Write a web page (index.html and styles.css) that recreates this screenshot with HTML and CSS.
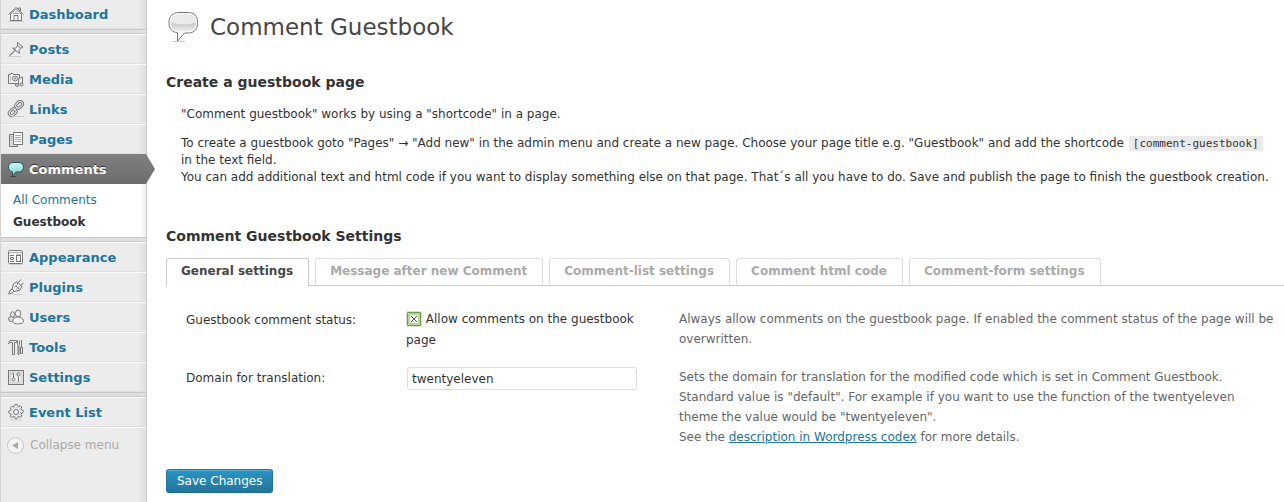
FILE: index.html
```html
<!DOCTYPE html>
<html lang="en">
<head>
<meta charset="utf-8">
<title>Comment Guestbook</title>
<link rel="stylesheet" href="styles.css">
</head>
<body>
<div class="admin">
  <nav class="sidebar" aria-label="Admin menu">
    <div class="group">
      <a class="item" href="#"><svg class="icon" viewBox="0 0 18 18"><path d="M3.500 9v6.500h11V9L9 4z" fill="#fafafa"/><path d="M1.500 9.500 9 2.500l7.500 7M3.500 8.500v7h3.500v-5h4v5h3.500v-7M13.500 6V3h-2v1.500"/><path d="M3 9.500 9 4l6 5.500M6 8.500h6M9 5.500V8" stroke="#aaa"/><path d="M1 16.500h16" stroke="#ccc"/></svg>Dashboard</a>
    </div>
    <div class="group">
      <a class="item" href="#"><svg class="icon" viewBox="0 0 18 18"><path d="m10.500 2.500 5.500 4.500-2 1-2 2.500.5 3L5.500 8l3 .3L10.500 5.500z" fill="#eee"/><path d="m8 10.500-6 6M9 9.500l-6 5.500M10.500 5.500l3 2.500"/><path d="M2 16.500h12" stroke="#ccc"/></svg>Posts</a>
      <a class="item" href="#"><svg class="icon" viewBox="0 0 18 18"><path d="M1.500 4.500h2l.5-1h2l.5 1h6v9h-11z" fill="#f8f8f8"/><circle cx="8" cy="8.500" r="2.500"/><circle cx="8" cy="8.500" r=".7"/><path d="M3.500 6v6" stroke="#bbb"/><path d="M11.500 15V8.500l4-1.500v7" fill="#eee"/><circle cx="10" cy="15" r="1.500" fill="#ddd"/><circle cx="14.500" cy="14.500" r="1.500" fill="#ddd"/></svg>Media</a>
      <a class="item" href="#"><svg class="icon" viewBox="0 0 18 18"><g fill="none"><rect x="8.500" y="2.500" width="7.500" height="5" rx="2.500" transform="rotate(-45 12 5)" stroke-width="3"/><rect x="2" y="10" width="7.500" height="5" rx="2.500" transform="rotate(-45 5.500 12.500)" stroke-width="3"/><path d="m6.500 11 4.500-4.500" stroke-width="3"/><path d="m6.500 11 4.500-4.500" stroke="#eee"/><rect x="8.500" y="2.500" width="7.500" height="5" rx="2.500" transform="rotate(-45 12 5)" stroke="#e8e8e8"/><rect x="2" y="10" width="7.500" height="5" rx="2.500" transform="rotate(-45 5.500 12.500)" stroke="#e8e8e8"/></g><path d="M5 16.500h12" stroke="#ccc"/></svg>Links</a>
      <a class="item" href="#"><svg class="icon" viewBox="0 0 18 18"><path d="M2.500 4.500h8v12h-8z" fill="#ddd"/><path d="M6.500 2.500h9v12h-9z" fill="#fff"/><path d="M8 5.500h6M8 7.500h6M8 9.500h6M8 11.500h6M3.500 6.500h2M3.500 8.500h2M3.500 10.500h2" stroke="#aaa"/></svg>Pages</a>
      <a class="item current" href="#"><svg class="icon bubble" viewBox="0 0 18 18"><defs><linearGradient id="aqua" x2="0" y2="1"><stop stop-color="#d5f7f4"/><stop offset="1" stop-color="#6fcfca"/></linearGradient></defs><path d="M3 16.500h6" stroke="#444"/><path d="M7 2.500h5a4.500 4.700 0 0 1 0 9.500H9l-3.500 4V12A4.700 4.700 0 0 1 7 2.500z" fill="url(#aqua)"/></svg>Comments<svg class="arrow" viewBox="0 0 10 30"><defs><linearGradient id="gray" x2="0" y2="1"><stop stop-color="#808080"/><stop offset="1" stop-color="#6d6d6d"/></linearGradient></defs><path d="M0 0l9 15-9 15z" fill="url(#gray)"/></svg></a>
      <div class="submenu">
        <a href="#">All Comments</a>
        <a class="selected" href="#">Guestbook</a>
      </div>
    </div>
    <div class="group">
      <a class="item" href="#"><svg class="icon" viewBox="0 0 18 18"><rect x="1.500" y="2.500" width="14" height="13" rx="1" fill="#fafafa"/><path d="M2 4.500h13" stroke="#aaa"/><path d="M3 7.500h4M3.500 9.500h3v2h-3zM3 13.500h4M9 7h5"/><rect x="9.500" y="7.500" width="4" height="6" fill="#fff"/><path d="M2 16.500h14" stroke="#ccc"/></svg>Appearance</a>
      <a class="item" href="#"><svg class="icon" viewBox="0 0 18 18"><path d="M10 3.500 6.500 6 5 11l2.500 2.500 5.500-1.500 2-3.500z" fill="#eee"/><path d="m10 6 4-4.500M12.500 8.500 16.500 5M8.500 7.500l4 4M5.500 11l-2 1-2 4M7 13l-2 2-3 1"/><path d="M7 9.500 11 6M9 11.500l3-2.500" stroke="#aaa"/><path d="M5 16.500h10" stroke="#ccc"/></svg>Plugins</a>
      <a class="item" href="#"><svg class="icon" viewBox="0 0 18 18"><ellipse cx="4.500" cy="11" rx="3" ry="2.500" fill="#ddd"/><ellipse cx="5.500" cy="6.500" rx="2" ry="2.700" fill="#eee"/><ellipse cx="11" cy="5.500" rx="2.600" ry="3.500" fill="#f5f5f5"/><path d="M9 9c-2 1-4 3-3 5 1 2.500 9 2.500 10.500 0 .5-2.500-1.500-4-3.500-5z" fill="#f5f5f5"/></svg>Users</a>
      <a class="item" href="#"><svg class="icon" viewBox="0 0 18 18"><path d="M1.500 5.500 3 2.500h6.500v2h-2v12h-2v-12H3.500z" fill="#eee"/><path d="M14.500 2v7"/><path d="M13.500 9.500h2v6h-2zM10.500 2.500v4l.5 1v9h1v-9l.5-1v-4" fill="#eee"/></svg>Tools</a>
      <a class="item" href="#"><svg class="icon" viewBox="0 0 18 18"><rect x="1.500" y="2.500" width="15" height="14" fill="#fff"/><rect x="3" y="4" width="12" height="11" fill="#eee" stroke="#bbb"/><path d="M6.500 5v5M11.500 8.500V14M5 5.500v1M10 5.500v1"/><circle cx="6.500" cy="11.500" r="1.500"/><circle cx="11.500" cy="6.500" r="1.500"/></svg>Settings</a>
    </div>
    <div class="group">
      <a class="item" href="#"><svg class="icon" viewBox="0 0 18 18"><path d="m7.500 3 .5-1.500h2l.5 1.500 1.500.6 1.500-.9 1.300 1.300-.8 1.500.7 1.500 1.500.5v2l-1.500.5-.7 1.500.8 1.500-1.300 1.300-1.500-.8-1.500.7-.5 1.500H8l-.5-1.500-1.500-.7-1.500.8L3.200 13.500 4 12l-.7-1.500-1.500-.5V8l1.500-.5L4 6l-.8-1.500 1.300-1.300L6 4z" fill="#f0f0f0"/><circle cx="9" cy="9" r="2.500"/><circle cx="9" cy="9" r="4.500" stroke="#bbb" stroke-dasharray="2 1.500"/><path d="M3 17h12" stroke="#ccc"/></svg>Event List</a>
    </div>
    <button class="collapse" type="button"><svg class="icon" viewBox="0 0 18 18"><circle cx="8.500" cy="8.500" r="8" fill="#f3f3f3" stroke="#c4c4c4"/><path d="M11 5v7L5 8.500z" fill="#aaa" stroke="none"/></svg>Collapse menu</button>
  </nav>

  <main class="content">
    <header class="title">
      <svg class="title-icon" viewBox="0 0 32 34"><defs><linearGradient id="silver" x2="0" y2="1"><stop stop-color="#dcdcdc"/><stop offset=".6" stop-color="#cfcfcf"/><stop offset="1" stop-color="#ededed"/></linearGradient></defs><path d="M6 31.500h13" stroke="#ccc"/><path d="M12.500 2.500h10c5.500 0 9 4 9 9v2c0 6-4 9.500-9 9.500h-4l-7 8v-8.200c-5-.6-8.500-4.300-8.500-9.300v-2c0-5 4-9 9.500-9z" fill="#fff" stroke="#777"/><path d="M13 4.500h9c5 0 8 3 8 7.500v1c0 5-3 8.500-8 8.500h-9c-5 0-8-3.500-8-8.500v-1c0-4.500 3-7.500 8-7.500z" fill="url(#silver)"/><path d="M5 12C5.500 7 9 5 13 5h9c4 0 7.500 2 8 7-6 3-19 3-25 0z" fill="#ebebeb"/></svg>
      <h1>Comment Guestbook</h1>
    </header>

    <h2>Create a guestbook page</h2>
    <div class="intro">
      <p>"Comment guestbook" works by using a "shortcode" in a page.</p>
      <p>To create a guestbook goto "Pages" → "Add new" in the admin menu and create a new page. Choose your page title e.g. "Guestbook" and add the shortcode <code>[comment-guestbook]</code> in the text field.<br>
      You can add additional text and html code if you want to display something else on that page. That´s all you have to do. Save and publish the page to finish the guestbook creation.</p>
    </div>

    <h2>Comment Guestbook Settings</h2>
    <div class="tabs">
      <a class="tab active" href="#">General settings</a>
      <a class="tab" href="#">Message after new Comment</a>
      <a class="tab" href="#">Comment-list settings</a>
      <a class="tab" href="#">Comment html code</a>
      <a class="tab" href="#">Comment-form settings</a>
    </div>

    <form class="settings">
      <div class="row">
        <label class="name" for="status">Guestbook comment status:</label>
        <div class="field">
          <label><input class="check" id="status" type="checkbox" checked> Allow comments on the guestbook page</label>
        </div>
        <p class="help">Always allow comments on the guestbook page. If enabled the comment status of the page will be overwritten.</p>
      </div>
      <div class="row">
        <label class="name" for="domain">Domain for translation:</label>
        <div class="field"><input class="text" id="domain" type="text" value="twentyeleven"></div>
        <p class="help">Sets the domain for translation for the modified code which is set in Comment Guestbook.<br>
        Standard value is "default". For example if you want to use the function of the twentyeleven theme the value would be "twentyeleven".<br>
        See the <a href="#">description in Wordpress codex</a> for more details.</p>
      </div>
      <button class="save" type="submit">Save Changes</button>
    </form>
  </main>
</div>
</body>
</html>
```

FILE: styles.css
```css
* {
  box-sizing: border-box;
}

body {
  margin: 0;
  background: #fff;
  color: #333;
  font: 12px/17px "DejaVu Sans", Verdana, sans-serif;
}

.admin {
  display: flex;
  min-height: 100vh;
}

/* Sidebar */
.sidebar {
  flex: none;
  width: 147px;
  border-left: 1px solid #d4d4d4;
  border-right: 1px solid #ccc;
  background: linear-gradient(to left, #dedede, #ececec 8px);
}

.group {
  border-bottom: 1px solid #c8c8c8;
  margin-bottom: 3px;
  box-shadow: 0 3px #dfdfdf, 0 4px #ccc;
}

.group + .group {
  padding-top: 1px;
}

.group:nth-last-of-type(1) {
  border-bottom: 0;
  box-shadow: none;
  margin-bottom: 0;
}

.item {
  position: relative;
  display: flex;
  align-items: center;
  gap: 4px;
  height: 30px;
  padding-left: 6px;
  border-top: 1px solid #f9f9f9;
  border-bottom: 1px solid #dfdfdf;
  color: #21759b;
  font-size: 13px;
  font-weight: bold;
  text-decoration: none;
}

.icon {
  flex: none;
  width: 18px;
  height: 18px;
  fill: none;
  stroke: #777;
}

.bubble {
  stroke: #235a57;
}

.group:first-child .item {
  height: 29px;
  border-top: 0;
}

.current {
  border-color: #808080 #6d6d6d #6d6d6d;
  background: linear-gradient(#808080, #6d6d6d);
  color: #fff;
  text-shadow: 0 -1px #333;
}

.arrow {
  position: absolute;
  top: -1px;
  left: 100%;
  width: 10px;
  height: 30px;
}

.submenu {
  display: flex;
  flex-direction: column;
  padding: 5px 0 4px;
  background: linear-gradient(to left, #eee, #fff 6px);
}

.submenu a {
  padding-left: 12px;
  color: #21759b;
  line-height: 22px;
  text-decoration: none;
}

.submenu .selected {
  color: #333;
  font-weight: bold;
}

.collapse {
  display: flex;
  align-items: center;
  gap: 5px;
  width: 100%;
  height: 36px;
  padding: 0 0 0 6px;
  border: 0;
  border-top: 1px solid #f9f9f9;
  background: none;
  color: #aaa;
  font: inherit;
}

/* Content */
.content {
  flex: 1;
  min-width: 0;
  padding: 10px 0 8px 19px;
}

.title {
  display: flex;
  align-items: center;
  gap: 12px;
}

.title-icon {
  width: 32px;
  height: 34px;
  fill: none;
}

h1 {
  margin: 0;
  color: #464646;
  font-size: 23px;
  font-weight: normal;
  line-height: 34px;
}

h2 {
  margin: 28px 0 14px;
  font-size: 14px;
  line-height: 20px;
}

.intro {
  padding: 0 12px 0 15px;
}

.intro p {
  margin: 0 0 12px;
}

.intro + h2 {
  margin: 40px 0 12px;
}

code {
  margin: 0 1px;
  padding: 1px 4px;
  background: #eaeaea;
  font: 11px "DejaVu Sans Mono", monospace;
}

.tabs {
  display: flex;
  gap: 6px;
  border-bottom: 1px solid #ccc;
}

.tab {
  padding: 4px 15px 5px 14px;
  border: 1px solid #dfdfdf;
  border-bottom: 0;
  border-radius: 3px 3px 0 0;
  color: #aaa;
  font-weight: bold;
  text-decoration: none;
}

.active {
  margin-bottom: -1px;
  padding-bottom: 6px;
  border-color: #ccc;
  background: #fff;
  color: #464646;
}

.settings {
  padding-top: 23px;
}

.row {
  display: grid;
  grid-template-columns: 220px 231px 1fr;
  padding: 0 8px 16px 20px;
}

.name {
  line-height: 22px;
}

.field {
  line-height: 21px;
}

.check {
  appearance: none;
  width: 14px;
  height: 14px;
  margin: 0 1px 0 1px;
  border: 1px solid #6f9a4c;
  border-radius: 1px;
  background:
    linear-gradient(45deg, transparent 42%, #555 42% 58%, transparent 58%) center / 6px 6px no-repeat,
    linear-gradient(-45deg, transparent 42%, #555 42% 58%, transparent 58%) center / 6px 6px no-repeat,
    linear-gradient(#fff, #fff) center / 8px 8px no-repeat,
    #b4dc8e;
  box-shadow: 0 0 0 1px #ddd;
  vertical-align: -3px;
}

.text {
  width: 230px;
  height: 23px;
  margin: 0 0 0 1px;
  padding: 2px 4px;
  border: 1px solid #dfdfdf;
  border-radius: 3px;
  color: #333;
  font: inherit;
}

.help {
  margin: 0;
  padding-left: 42px;
  color: #666;
  line-height: 20px;
}

.help a {
  color: #21759b;
}

.save {
  height: 24px;
  margin-top: 6px;
  padding: 0 10px;
  border: 1px solid #21759b;
  border-bottom-color: #1e6a8d;
  border-radius: 3px;
  background: linear-gradient(#2a95c5, #21759b);
  box-shadow: inset 0 1px rgba(120, 200, 230, .5);
  color: #fff;
  font: inherit;
}
```
